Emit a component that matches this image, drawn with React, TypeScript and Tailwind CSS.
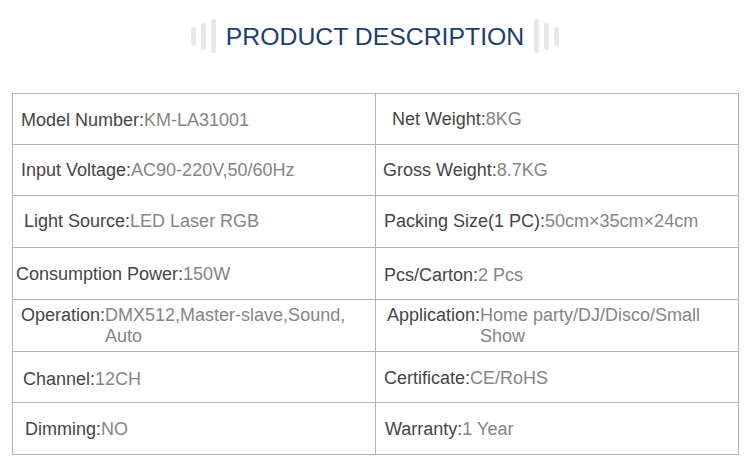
import React from "react";

type Cell = { label: string; value: string; pl: string; pt?: string; wrap?: boolean };

const rows: { h: string; left: Cell; right: Cell }[] = [
  {
    h: "h-[51px]",
    left: { label: "Model Number:", value: "KM-LA31001", pl: "pl-[8px]", pt: "pt-[3px]" },
    right: { label: "Net Weight:", value: "8KG", pl: "pl-[16px]" },
  },
  {
    h: "h-[51px]",
    left: { label: "Input Voltage:", value: "AC90-220V,50/60Hz", pl: "pl-[8px]", pt: "pt-[1px]" },
    right: { label: "Gross Weight:", value: "8.7KG", pl: "pl-[7px]", pt: "pt-[1px]" },
  },
  {
    h: "h-[52px]",
    left: { label: "Light Source:", value: "LED Laser RGB", pl: "pl-[11px]" },
    right: { label: "Packing Size(1 PC):", value: "50cm×35cm×24cm", pl: "pl-[8px]" },
  },
  {
    h: "h-[52px]",
    left: { label: "Consumption Power:", value: "150W", pl: "pl-[3px]", pt: "pt-[2px]" },
    right: { label: "Pcs/Carton:", value: "2 Pcs", pl: "pl-[8px]", pt: "pt-[3px]" },
  },
  {
    h: "h-[52px]",
    left: { label: "Operation:", value: "DMX512,Master-slave,Sound, Auto", pl: "pl-[8px]", pt: "pt-[1px]", wrap: true },
    right: { label: "Application:", value: "Home party/DJ/Disco/Small Show", pl: "pl-[11px]", pt: "pt-[1px]", wrap: true },
  },
  {
    h: "h-[51px]",
    left: { label: "Channel:", value: "12CH", pl: "pl-[10px]", pt: "pt-[4px]" },
    right: { label: "Certificate:", value: "CE/RoHS", pl: "pl-[8px]", pt: "pt-[2px]" },
  },
  {
    h: "h-[52px]",
    left: { label: "Dimming:", value: "NO", pl: "pl-[12px]", pt: "pt-[1px]" },
    right: { label: "Warranty:", value: "1 Year", pl: "pl-[9px]", pt: "pt-[1px]" },
  },
];

function TableCell({ cell, h, right }: { cell: Cell; h: string; right?: boolean }) {
  const base = `${h} ${cell.pl} ${cell.pt ?? ""} flex items-center border-b border-[#b3b3b3] ${
    right ? "border-r pr-[10px]" : "border-r pr-[4px]"
  }`;
  if (cell.wrap) {
    return (
      <div className={base}>
        <div className="flex items-start leading-[21px]">
          <span className="text-[#454545] whitespace-nowrap">{cell.label}</span>
          <span className="text-[#858585]">{cell.value}</span>
        </div>
      </div>
    );
  }
  return (
    <div className={base}>
      <span className="whitespace-nowrap leading-[21px]">
        <span className="text-[#454545]">{cell.label}</span>
        <span className="text-[#858585]">{cell.value}</span>
      </span>
    </div>
  );
}

function Bar({ h }: { h: string }) {
  return <div className={`w-[5px] ${h} rounded-full bg-[#e7e7e9]`} />;
}

export default function App() {
  return (
    <div
      className="w-[750px] h-[474px] bg-white overflow-hidden"
      style={{ fontFamily: '"Liberation Sans", Arial, sans-serif' }}
    >
      <div className="h-[72px] flex items-center justify-center">
        <div className="flex items-center gap-[5px]">
          <Bar h="h-[19px]" />
          <Bar h="h-[27px]" />
          <Bar h="h-[34px]" />
        </div>
        <div className="mx-[10px] text-[24.8px] leading-none text-[#1d3d70] pt-[2px] whitespace-nowrap">
          PRODUCT DESCRIPTION
        </div>
        <div className="flex items-center gap-[5px]">
          <Bar h="h-[34px]" />
          <Bar h="h-[27px]" />
          <Bar h="h-[19px]" />
        </div>
      </div>
      <div className="mt-[21px] ml-[12px] w-[727px] border-t border-l border-[#b3b3b3] grid grid-cols-2 text-[18px]">
        {rows.map((r, i) => (
          <React.Fragment key={i}>
            <TableCell cell={r.left} h={r.h} />
            <TableCell cell={r.right} h={r.h} right />
          </React.Fragment>
        ))}
      </div>
    </div>
  );
}
